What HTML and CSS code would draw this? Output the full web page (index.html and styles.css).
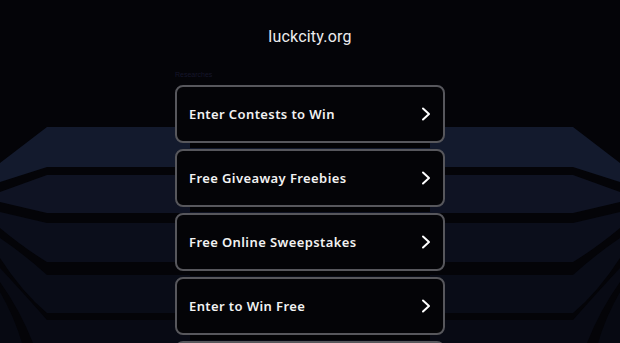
FILE: index.html
```html
<!DOCTYPE html>
<html>
<head>
<meta charset="utf-8">
<link rel="stylesheet" href="styles.css">
</head>
<body>
<svg class="backdrop" viewBox="0 0 620 343" width="620" height="343">
  <path fill="#131a2d" d="M0,163 L47,127 H573 L620,163 V182 L573,167 H47 L0,182 Z"/>
  <path fill="#0f1323" d="M0,192 L47,175 H573 L620,192 V202 L573,213 H47 L0,202 Z"/>
  <path fill="#0b0e1b" d="M0,212 L47,223 H573 L620,212 V228 Q596,248 573,262 H47 Q24,248 0,228 Z"/>
  <path fill="#090c17" d="M0,238 Q25,255 47,275 H573 Q595,255 620,238 V258 Q598,292 573,313 H47 Q22,292 0,258 Z"/>
  <path fill="#080a14" d="M0,268 Q26,296 47,320 H573 Q594,296 620,268 V282 Q600,310 587,343 H33 Q20,310 0,282 Z"/>
  <path fill="#070912" d="M0,292 Q14,316 22,343 H0 Z M620,292 Q606,316 598,343 H620 Z"/>
</svg>
<div class="page">
  <header class="head">
    <h1 class="domain">luckcity.org</h1>
  </header>
  <div class="list">
    <div class="label">Researches</div>
    <a class="item" href="#"><span>Enter Contests to Win</span><svg class="chev" viewBox="0 0 10 14" width="10" height="14"><polyline points="2,1.5 8,7 2,12.5" fill="none" stroke="#fff" stroke-width="2" stroke-linecap="round" stroke-linejoin="round"/></svg></a>
    <a class="item" href="#"><span>Free Giveaway Freebies</span><svg class="chev" viewBox="0 0 10 14" width="10" height="14"><polyline points="2,1.5 8,7 2,12.5" fill="none" stroke="#fff" stroke-width="2" stroke-linecap="round" stroke-linejoin="round"/></svg></a>
    <a class="item" href="#"><span>Free Online Sweepstakes</span><svg class="chev" viewBox="0 0 10 14" width="10" height="14"><polyline points="2,1.5 8,7 2,12.5" fill="none" stroke="#fff" stroke-width="2" stroke-linecap="round" stroke-linejoin="round"/></svg></a>
    <a class="item" href="#"><span>Enter to Win Free</span><svg class="chev" viewBox="0 0 10 14" width="10" height="14"><polyline points="2,1.5 8,7 2,12.5" fill="none" stroke="#fff" stroke-width="2" stroke-linecap="round" stroke-linejoin="round"/></svg></a>
    <a class="item" href="#" aria-label="More"></a>
  </div>
</div>
</body>
</html>
```
FILE: styles.css
```css
html, body {
  margin: 0;
  padding: 0;
  width: 620px;
  height: 343px;
  overflow: hidden;
  background: #040408;
}

.backdrop {
  position: absolute;
  left: 0;
  top: 0;
  z-index: 0;
  display: block;
}

.page {
  position: relative;
  z-index: 1;
  display: flex;
  flex-direction: column;
  align-items: center;
}

.head {
  padding-top: 27px;
  height: 42px;
}

.domain {
  margin: 0;
  font-family: Roboto, "Liberation Sans", Arial, sans-serif;
  font-weight: 400;
  font-size: 16px;
  line-height: 20px;
  color: #ececee;
  letter-spacing: 0.2px;
}

.list {
  width: 270px;
  display: flex;
  flex-direction: column;
  gap: 6px;
}

.label {
  font-family: "Liberation Sans", Arial, sans-serif;
  font-size: 7px;
  line-height: 11px;
  color: #16162a;
  margin-bottom: -1px;
}

.item {
  box-sizing: border-box;
  height: 58px;
  flex: none;
  display: flex;
  align-items: center;
  justify-content: space-between;
  padding: 0 12px 0 12px;
  border: 2px solid #57575c;
  border-radius: 8px;
  background: #040407;
  text-decoration: none;
  box-shadow: 0 20px 0 -15px #030305;
}

.item span {
  font-family: "Noto Sans", "DejaVu Sans", sans-serif;
  font-weight: 600;
  font-size: 13px;
  letter-spacing: 0.4px;
  color: #f2f2f2;
}

.chev {
  display: block;
}
```
